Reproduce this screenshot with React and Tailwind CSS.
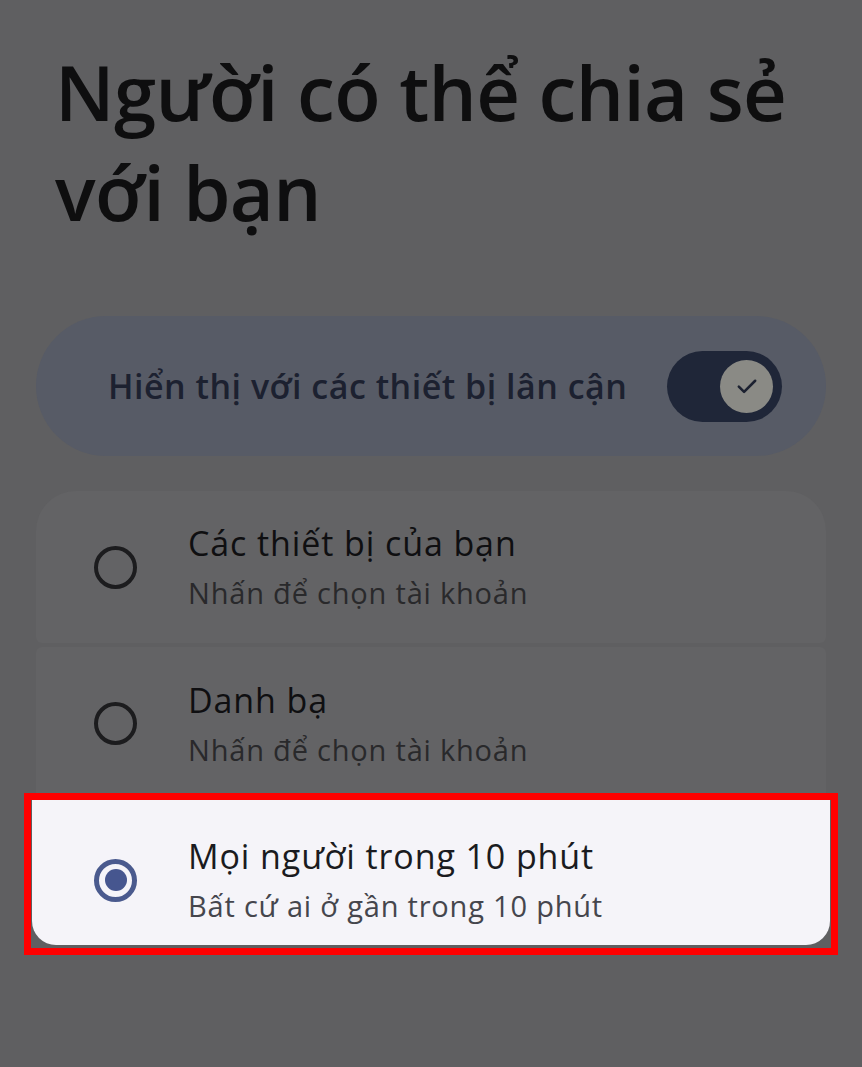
import React from 'react';

function Radio({ checked }) {
  return (
    <div
      className={`w-[43px] h-[43px] rounded-full flex items-center justify-center shrink-0 ${
        checked ? 'border-[5px] border-[#4a5a8e]' : 'border-[4px] border-[#1c1c1e]'
      }`}
    >
      {checked && <div className="w-[22px] h-[22px] rounded-full bg-[#46568f]" />}
    </div>
  );
}

function Option({ title, subtitle, checked, className }) {
  return (
    <div className={`flex items-center pl-[58px] pr-6 ${className}`}>
      <Radio checked={checked} />
      <div className="ml-[51px] flex flex-col gap-[8px]">
        <div className={`text-[34px] leading-[44px] tracking-[0.9px] ${checked ? 'text-[#1a1b20]' : 'text-[#0f0f11]'}`}>
          {title}
        </div>
        <div className={`text-[29px] leading-[40px] tracking-[0.8px] ${checked ? 'text-[#45464d]' : 'text-[#29292b]'}`}>
          {subtitle}
        </div>
      </div>
    </div>
  );
}

export default function App() {
  return (
    <div
      className="w-[862px] h-[1067px] bg-[#5f5f61] overflow-hidden"
      style={{ fontFamily: '"Open Sans", "Noto Sans", sans-serif' }}
    >
      <h1 className="pl-[55px] pt-[42px] text-[76px] leading-[100px] text-[#0e0e0f] font-semibold tracking-[-0.6px]">
        Người có thể chia sẻ
        <br />
        với bạn
      </h1>

      <div className="mx-[36px] mt-[74px] h-[140px] rounded-full bg-[#575b66] flex items-center pl-[72px] pr-[44px]">
        <span className="flex-1 text-[34px] font-semibold tracking-[0.5px] text-[#1c2130]">
          Hiển thị với các thiết bị lân cận
        </span>
        <div className="w-[115px] h-[71px] rounded-full bg-[#1f2638] flex items-center justify-end pr-[9px]">
          <div className="w-[53px] h-[53px] rounded-full bg-[#8a8a85] flex items-center justify-center">
            <svg width="28" height="28" viewBox="0 0 24 24" fill="none" stroke="#1c2130" strokeWidth="2.2" strokeLinecap="round" strokeLinejoin="round">
              <path d="M5 12.5l4.5 4.5L19 7.5" />
            </svg>
          </div>
        </div>
      </div>

      <div className="mx-[36px] mt-[35px] flex flex-col gap-[4px]">
        <Option
          title="Các thiết bị của bạn"
          subtitle="Nhấn để chọn tài khoản"
          className="h-[152px] bg-[#636365] rounded-t-[40px] rounded-b-[6px]"
        />
        <Option
          title="Danh bạ"
          subtitle="Nhấn để chọn tài khoản"
          className="h-[146px] pt-[7px] bg-[#636365] rounded-t-[6px]"
        />
      </div>

      <div className="mx-[24px] h-[162px] border-[7px] border-[#ff0000] bg-[#5f5f61]">
        <div className="pl-[1px] pr-[1px]">
          <Option
            title="Mọi người trong 10 phút"
            subtitle="Bất cứ ai ở gần trong 10 phút"
            checked
            className="h-[145px] pt-[15px] bg-[#f5f4f9] rounded-b-[24px] pl-[62px]"
          />
        </div>
      </div>
    </div>
  );
}
